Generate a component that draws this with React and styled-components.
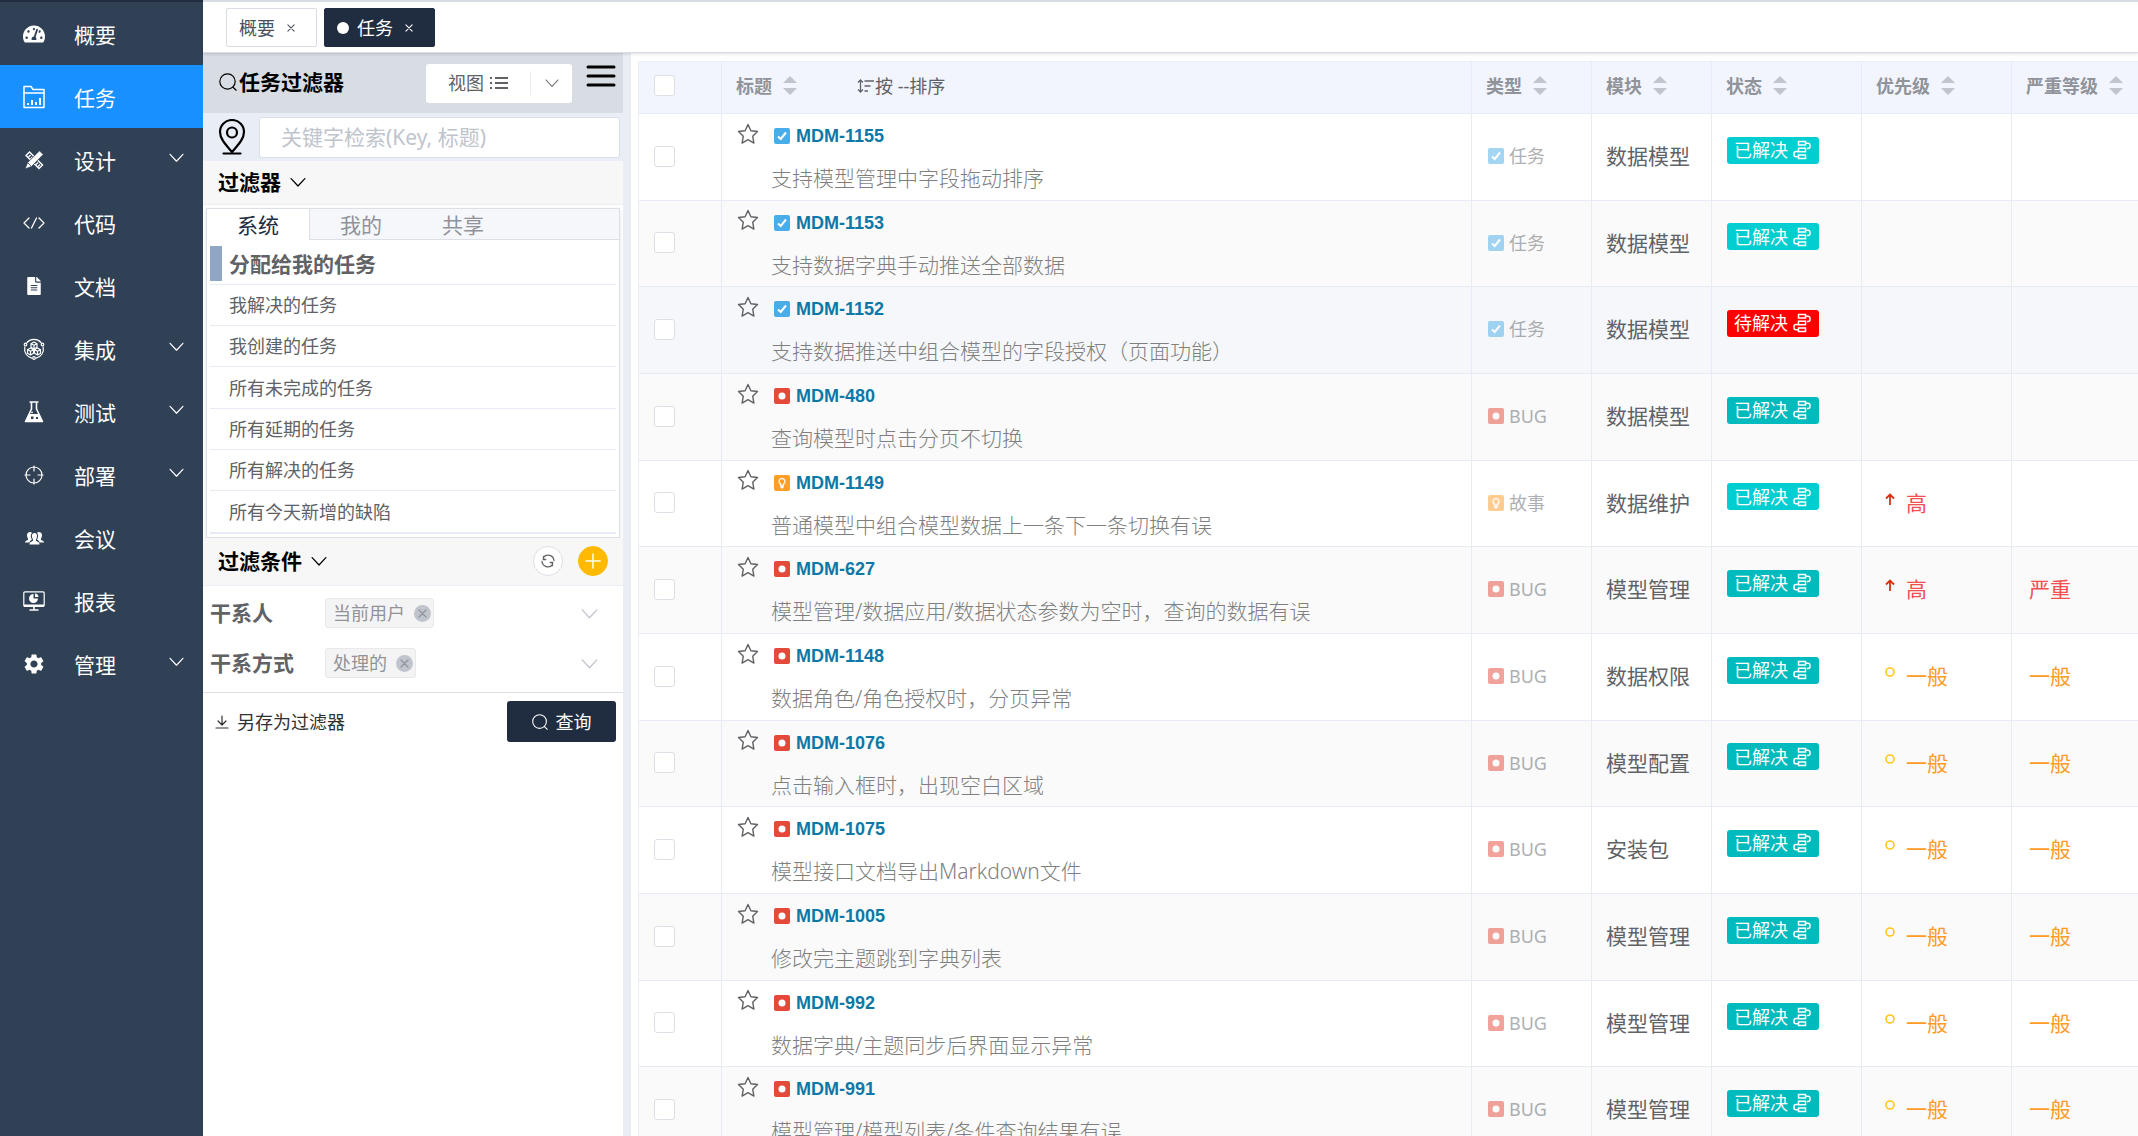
import React, { useState } from 'react';

import styled, { createGlobalStyle, css } from 'styled-components';
import { FaFileAlt, FaTachometerAlt } from 'react-icons/fa';
import { MdSettings } from 'react-icons/md';

const GlobalStyle = createGlobalStyle`
  *,
  *::before,
  *::after {
    box-sizing: border-box;
  }

  body {
    margin: 0;
    background: #fff;
    color: #606266;
    font-family: 'Noto Sans', 'Noto Sans CJK SC', sans-serif;
    font-size: 18px;
    line-height: 24px;
  }

  button,
  input {
    margin: 0;
    font: inherit;
    color: inherit;
  }

  button {
    padding: 0;
    border: 0;
    background: none;
    cursor: pointer;
  }

  a {
    color: inherit;
    text-decoration: none;
  }

  ul {
    margin: 0;
    padding: 0;
    list-style: none;
  }

  h2,
  h3 {
    margin: 0;
    font-size: 21px;
    line-height: 28px;
    color: #000;
  }

  svg {
    display: block;
    flex: none;
  }
`;

/* ---------- icons ---------- */

const Stroke = ({ size = 20, height, width = 1, box = '0 0 24 24', children }) => (
  <svg
    width={size}
    height={height || size}
    viewBox={box}
    fill="none"
    stroke="currentColor"
    strokeWidth={width}
    strokeLinecap="round"
    strokeLinejoin="round"
    aria-hidden="true"
  >
    {children}
  </svg>
);

const ChevronIcon = ({ size = 14 }) => (
  <Stroke size={size} height={size} box="0 0 14 14" width={1.1}>
    <path d="M1 4l6 6.5L13 4" />
  </Stroke>
);

const SearchIcon = ({ size = 18 }) => (
  <Stroke size={size} box="0 0 18 18" width={1.2}>
    <circle cx="8.5" cy="8.5" r="7.7" />
    <path d="M14 14.2l3.2 3" />
  </Stroke>
);

const BoardIcon = () => (
  <Stroke size={22} height={24} box="0 0 22 24" width={1.5}>
    <path d="M1 22.5V1.5h7l2 3h11v18z" />
    <path d="M1 8h20" />
    <path d="M5 20v-2M9 20v-5M13 20v-3M17 20v-7" strokeWidth="2" strokeLinecap="butt" />
  </Stroke>
);

const DesignIcon = () => (
  <svg width="20" height="20" viewBox="0 0 20 20" fill="none" stroke="currentColor" aria-hidden="true">
    <path d="M2 5.500L5.500 2 18.500 15 15 18.500z" strokeWidth="1.400" />
    <path d="M4.500 7l2-2M6.500 9l2-2M12 14.500l2-2M14 16.500l2-2" strokeWidth="1.300" />
    <path d="M15.500 0.800l3.700 3.700L7.500 16.500l-6.500 2.500L3.500 12.700z" fill="currentColor" stroke="#304156" strokeWidth="0.800" />
    <path d="M4 13l3 3" stroke="#304156" strokeWidth="0.800" />
  </svg>
);

const CodeIcon = () => (
  <Stroke size={22} height={14} box="0 0 22 14" width={1.3}>
    <path d="M6 2L1 7l5 5M16 2l5 5-5 5M13.500 2l-5 10" />
  </Stroke>
);

const IntegrationIcon = () => (
  <Stroke size={22} box="0 0 22 22" width={1.2}>
    <path d="M4 4.500A9.500 9.500 0 0 1 18 4.500M20.200 9a9.500 9.500 0 0 1-7 11.200M8.800 20.200A9.500 9.500 0 0 1 1.800 9" />
    <circle cx="2.500" cy="6.500" r="1.300" />
    <circle cx="19.500" cy="6.500" r="1.300" />
    <circle cx="11" cy="20" r="1.300" />
    <path d="M11 4l3 1.700v3.600L11 11 8 9.300V5.700zM8 5.700l3 1.600 3-1.600M11 7.300V11" />
    <path d="M7.500 10l3 1.700v3.600l-3 1.700-3-1.700v-3.600zM4.500 11.700l3 1.600 3-1.600M7.500 13.300V17" />
    <path d="M14.500 10l3 1.700v3.600l-3 1.700-3-1.700v-3.600zM11.500 11.700l3 1.600 3-1.600M14.500 13.300V17" />
  </Stroke>
);

const FlaskIcon = () => (
  <svg width="20" height="22" viewBox="0 0 20 22" aria-hidden="true">
    <path
      d="M5.500 1h9M7.500 1v7L1.500 20.500h17L12.500 8V1"
      fill="none"
      stroke="currentColor"
      strokeWidth="1.600"
      strokeLinejoin="round"
    />
    <path
      d="M5.500 13h9l4.300 8H1.200zM7 15.500v2.500h2.500v-2.500zM12 16v2h2v-2z"
      fill="currentColor"
      fillRule="evenodd"
    />
    <circle cx="8" cy="11.300" r="0.900" fill="currentColor" />
  </svg>
);

const TargetIcon = () => (
  <Stroke size={20} box="0 0 20 20" width={1.2}>
    <circle cx="10" cy="10" r="8" />
    <path d="M10 1v5M10 14v5M1 10h5M14 10h5" />
  </Stroke>
);

const MeetingIcon = () => (
  <svg width="19" height="14" viewBox="0 0 19 14" fill="currentColor" aria-hidden="true">
    <path d="M2 4c0-3 4-4 5-2-2 2-1 5 0 6.500L5 10l-.5 1.500H0C.3 9.500 2 9.500 3 9c.5-1.500-1-2-1-5z" />
    <path d="M17 4c0-3-4-4-5-2 2 2 1 5 0 6.500l2 1.500.5 1.500H19c-.3-2-2-2-3-2.500-.5-1.500 1-2 1-5z" />
    <path d="M9.500 2c3.300 0 3 4 1.500 6.500v1.300c1 1 3.500 1 3.500 3.700h-10c0-2.700 2.500-2.700 3.500-3.700V8.500C6.500 6 6.200 2 9.500 2z" />
  </svg>
);

const ReportIcon = () => (
  <svg width="22" height="20" viewBox="0 0 22 20" fill="none" stroke="currentColor" aria-hidden="true">
    <rect x="0.800" y="0.800" width="20.400" height="14.600" rx="1.200" strokeWidth="1.200" />
    <path d="M1 14.500h20" strokeWidth="2" />
    <path d="M6.500 19h9M11 16v3" strokeWidth="1.600" />
    <path d="M10.500 3v4.500h4.500a4.500 4.500 0 1 1-4.500-4.500z" fill="currentColor" stroke="none" />
    <path d="M12 2.500v3.500h3.500A4 4 0 0 0 12 2.500z" fill="currentColor" stroke="none" />
  </svg>
);

const PinIcon = () => (
  <Stroke size={30} height={36} box="0 0 30 36" width={2.2}>
    <path d="M15 33C9 26 3 20 3 13a12 12 0 0 1 24 0c0 7-6 13-12 20z" />
    <circle cx="15" cy="13.500" r="5" />
    <path d="M6.500 34.500h17" />
  </Stroke>
);

const MenuIcon = () => (
  <Stroke size={32} height={24} box="0 0 32 24" width={3}>
    <path d="M3 3h26M3 12h26M3 21h26" />
  </Stroke>
);

const ListIcon = () => (
  <svg width="18" height="16" viewBox="0 0 18 16" stroke="currentColor" strokeWidth="2" aria-hidden="true">
    <path d="M5 3h13M5 8h13M5 13h13M0 3h2M0 8h2M0 13h2" />
  </svg>
);

const SortListIcon = () => (
  <svg width="18" height="16" viewBox="0 0 18 16" fill="none" stroke="currentColor" strokeWidth="1.300" aria-hidden="true">
    <path d="M3.500 2v12M1 4.500L3.500 2 6 4.500M1 11.500L3.500 14 6 11.500M7.500 3h9.500M7.500 8h6M7.500 13h3.500" />
  </svg>
);

const StarIcon = () => (
  <Stroke size={22} box="0 0 22 22" width={1.4}>
    <path d="M11 1.500l2.900 6.200 6.600.8-4.800 4.700 1.200 6.900-5.900-3.400-5.900 3.400 1.200-6.900L1.500 8.500l6.600-.8z" />
  </Stroke>
);

const RefreshIcon = () => (
  <Stroke size={16} box="0 0 16 16" width={1.3}>
    <path d="M3.500 3.500v3M3.500 4.200A6 6 0 0 1 14 7.500M3.200 6.500h2.500" />
    <path d="M12.500 12.500v-3M12.500 11.800A6 6 0 0 1 2 8.500M12.800 9.500h-2.500" />
  </Stroke>
);

const DownloadIcon = () => (
  <Stroke size={14} box="0 0 14 14" width={1.2}>
    <path d="M7 1v8.500M3 6l4 4 4-4M1 13h12" />
  </Stroke>
);

const CloseIcon = ({ size = 9 }) => (
  <Stroke size={size} box="0 0 9 9" width={1.2}>
    <path d="M1 1l7 7M8 1L1 8" />
  </Stroke>
);

const FlowIcon = () => (
  <svg width="18" height="20" viewBox="0 0 18 20" fill="none" stroke="currentColor" strokeWidth="1.500" aria-hidden="true">
    <rect x="5.500" y="1.500" width="7" height="3.500" />
    <rect x="5.500" y="8.200" width="7" height="3.500" />
    <rect x="5.500" y="15" width="7" height="3.500" />
    <path d="M12.500 3.200H15a2 2 0 0 1 2 2v1.300a2 2 0 0 1-2 2h-1M5.500 11.500H3a2 2 0 0 0-2 2v1.300a2 2 0 0 0 2 2h2.500" />
  </svg>
);

const KindIcon = ({ kind }) => {
  const fill = { task: '#4bade8', bug: '#e5493a', story: '#ff9d26' }[kind];
  return (
    <svg width="16" height="16" viewBox="0 0 16 16" fill="none" aria-hidden="true">
      <rect width="16" height="16" rx="2" fill={fill} />
      {kind === 'task' && <path d="M4 8.500l2.700 2.500L12 4.500" stroke="#fff" strokeWidth="2" />}
      {kind === 'bug' && <circle cx="8" cy="8" r="3.500" fill="#fff" />}
      {kind === 'story' && (
        <>
          <path d="M8 3.300a3 3 0 0 0-1.600 5.500V10h3.200V8.800A3 3 0 0 0 8 3.300z" stroke="#fff" strokeWidth="1.200" />
          <path d="M6.200 10.500h3.600v1.500L8.800 13.500H7.200L6.200 12z" fill="#fff" />
        </>
      )}
    </svg>
  );
};

const ArrowUpIcon = () => (
  <svg width="10" height="12" viewBox="0 0 10 12" fill="none" stroke="#d9300e" strokeWidth="1.800" aria-hidden="true">
    <path d="M5 12V1.500M1 5.500l4-4 4 4" />
  </svg>
);

const RingIcon = () => (
  <svg width="10" height="12" viewBox="0 0 10 12" fill="none" stroke="#ffc61a" strokeWidth="1.600" aria-hidden="true">
    <circle cx="5" cy="6" r="4" />
  </svg>
);

/* ---------- layout ---------- */

const Page = styled.div`
  display: flex;
  height: 100vh;
  overflow: hidden;
`;

const Sidebar = styled.nav`
  flex: none;
  width: 203px;
  border-top: 2px solid #202d40;
  background: #304156;
`;

const NavItem = styled.a`
  display: grid;
  grid-template-columns: 26px 1fr 16px;
  column-gap: 27px;
  align-items: center;
  height: 63px;
  padding: 0 18px 0 21px;
  background: ${({ $active }) => ($active ? '#1890ff' : 'transparent')};
  color: #fff;
  font-size: 21px;

  .glyph {
    display: flex;
    justify-content: center;
  }

  .label {
    padding-top: 2px;
  }

  > svg {
    margin-bottom: 4px;
  }
`;

const Main = styled.main`
  display: flex;
  flex: 1;
  flex-direction: column;
  min-width: 0;
`;

const TopTabs = styled.div`
  display: flex;
  flex: none;
  gap: 7px;
  z-index: 1;
  height: 53px;
  padding: 6px 23px;
  border-top: 2px solid #d8dce5;
  border-bottom: 1px solid #d8dce5;
  background: #fff;
  box-shadow: 0 1px 3px rgba(0, 0, 0, 0.14);
`;

const TopTab = styled.div`
  display: flex;
  align-items: center;
  gap: 6px;
  height: 39px;
  padding: 0 15px 0 12px;
  border: 1px solid #d8dce5;
  border-radius: 2px;
  background: #fff;
  color: #495060;

  button {
    display: flex;
    align-items: center;
    justify-content: center;
    width: 20px;
    height: 20px;
  }

  ${({ $active }) =>
    $active &&
    css`
      border-color: #202d40;
      background: #202d40;
      color: #fff;

      &::before {
        content: '';
        width: 12px;
        height: 12px;
        margin-right: 2px;
        border-radius: 50%;
        background: #fff;
      }
    `}
`;

const Content = styled.div`
  display: flex;
  flex: 1;
  min-height: 0;
`;

/* ---------- filter panel ---------- */

const Panel = styled.aside`
  flex: none;
  width: 428px;
  border-right: 8px solid #e9edf4;
`;

const PanelHeader = styled.header`
  display: flex;
  align-items: center;
  height: 60px;
  padding: 0 6px 0 16px;
  background: #d8dce3;

  h2 {
    display: flex;
    flex: 1;
    align-items: center;
    gap: 2px;
    padding-bottom: 2px;
  }
`;

const ViewSwitch = styled.div`
  display: flex;
  align-items: center;
  height: 39px;
  margin-right: 13px;
  border-radius: 3px;
  background: #fff;

  button {
    display: flex;
    align-items: center;
    justify-content: center;
    gap: 6px;
    width: 104px;
    height: 24px;
  }

  button + button {
    width: 42px;
    border-left: 1px solid #e9ebf0;
  }
`;

const MenuButton = styled.button`
  align-self: flex-start;
  padding-top: 11px;
  color: #000;
`;

const SearchRow = styled.div`
  display: flex;
  align-items: center;
  gap: 12px;
  height: 48px;
  padding: 0 3px 0 14px;
  background: #e9edf6;
  color: #000;

  input {
    flex: 1;
    min-width: 0;
    height: 41px;
    padding: 0 21px;
    border: 1px solid #dcdfe6;
    border-radius: 3px;
    background: #fff;
    font-size: 21px;
  }

  input::placeholder {
    color: #c0c4cc;
  }
`;

const SectionBar = styled.div`
  display: flex;
  align-items: center;
  gap: 15px;
  height: ${({ $tall }) => ($tall ? 48 : 44)}px;
  padding: 0 15px 2px;
  border-bottom: 1px solid #ebeef5;
  background: #f7f7f7;

  h3 {
    flex: 1;
  }

  h3 button {
    display: flex;
    align-items: center;
    gap: 9px;
  }
`;

const RoundButton = styled.button`
  display: flex;
  align-items: center;
  justify-content: center;
  width: 30px;
  height: 30px;
  border: 1px solid ${({ $primary }) => ($primary ? '#ffba00' : '#dcdfe6')};
  border-radius: 50%;
  background: ${({ $primary }) => ($primary ? '#ffba00' : '#fff')};
  color: ${({ $primary }) => ($primary ? '#fff' : '#606266')};
`;

const Card = styled.div`
  margin: 3px 3px 0;
  border: 1px solid #dcdfe6;
  background: #fff;
  box-shadow: 0 2px 4px rgba(0, 0, 0, 0.12);
`;

const CardTabs = styled.div`
  display: flex;
  height: 31px;
  background: #f5f7fa;
  border-bottom: 1px solid #dcdfe6;
`;

const CardTab = styled.button`
  height: 31px;
  padding: 0 30px;
  font-size: 21px;
  color: ${({ $active }) => ($active ? '#202d40' : '#909399')};

  ${({ $active }) =>
    $active &&
    css`
      border-right: 1px solid #dcdfe6;
      background: #fff;
    `}
`;

const FilterList = styled.ul`
  padding: 3px;

  li {
    border-bottom: 1px solid #e6ebf5;
  }

  li:last-child {
    border-bottom-width: 2px;
  }

  button {
    display: flex;
    align-items: center;
    width: 100%;
    height: 40px;
    padding-left: 19px;
    text-align: left;
  }

  li:nth-child(3n + 1) button {
    height: 41px;
  }
`;

const FilterItem = styled.li`
  ${({ $current }) =>
    $current &&
    css`
      &&& button {
        height: 35px;
        margin: 3px 0;
        padding-left: 7px;
        border-left: 12px solid #8fa7c4;
        font-size: 21px;
        font-weight: 700;
      }
    `}
`;

const Conditions = styled.div`
  padding: 2px 3px 4px;
  border-bottom: 1px solid #dcdfe6;
`;

const Condition = styled.div`
  display: flex;
  align-items: center;
  height: 50px;
  padding: 0 22px 0 4px;

  > span {
    width: 115px;
    font-size: 21px;
    font-weight: 700;
  }

  > button {
    margin-left: auto;
    color: #c0c4cc;
  }
`;

const Chip = styled.div`
  display: flex;
  align-items: center;
  gap: 9px;
  height: 30px;
  padding: 0 2px 0 7px;
  border: 1px solid #e9e9eb;
  border-radius: 3px;
  background: #f4f4f5;
  color: #909399;

  button {
    display: flex;
    align-items: center;
    justify-content: center;
    width: 17px;
    height: 17px;
    border-radius: 50%;
    background: #c0c4cc;
  }
`;

const PanelFooter = styled.div`
  display: flex;
  align-items: center;
  justify-content: space-between;
  padding: 8px 7px 8px 12px;
  color: #303133;

  button {
    display: flex;
    align-items: center;
    gap: 8px;
  }
`;

const QueryButton = styled.button`
  && {
    justify-content: center;
    width: 109px;
    height: 41px;
    border-radius: 3px;
    background: #202d40;
    color: #fff;
  }
`;

/* ---------- table ---------- */

const TableArea = styled.section`
  flex: 1;
  min-width: 0;
  padding: 8px 0 0 7px;
  overflow: hidden;
`;

const Table = styled.table`
  width: 100%;
  border-top: 1px solid #ebeef5;
  border-left: 1px solid #ebeef5;
  border-spacing: 0;
  table-layout: fixed;

  th,
  td {
    padding: 0 14px 2px;
    border-right: 1px solid #e6ebf5;
    border-bottom: 1px solid #e6ebf5;
    text-align: left;
  }

  th {
    height: 52px;
    padding-bottom: 4px;
    background: #f2f5fe;
    color: #909399;
    white-space: nowrap;
  }

  th:first-child,
  td:first-child {
    padding-left: 15px;
  }

  th:last-child,
  td:last-child {
    border-right: 0;
  }
`;

const Row = styled.tr`
  height: 87px;
  background: ${({ $hover }) => ($hover ? '#f5f7fa' : '#fff')};

  &:nth-child(even) {
    background: #fafafa;
  }

  &:nth-child(3n + 2) {
    height: 86px;
  }
`;

const Check = styled.input.attrs({ type: 'checkbox' })`
  display: block;
  width: 21px;
  height: 21px;
  border: 1px solid #dcdfe6;
  border-radius: 3px;
  background: #fff;
  appearance: none;

  &:checked {
    border-color: #1890ff;
    background: #1890ff;
  }
`;

const HeadLine = styled.div`
  display: flex;
  align-items: center;
  gap: 11px;

  .sort-by {
    display: flex;
    align-items: center;
    margin-left: 49px;
    color: #606266;
    font-weight: 400;
  }
`;

const Caret = styled.button`
  display: flex;
  flex-direction: column;
  gap: 5px;

  &::before,
  &::after {
    content: '';
    border: 7px solid transparent;
  }

  &::before {
    border-top: 0;
    border-bottom-color: #c0c4cc;
  }

  &::after {
    border-bottom: 0;
    border-top-color: #c0c4cc;
  }
`;

const TitleLine = styled.div`
  display: flex;
  align-items: center;
  height: 24px;
  margin-top: 4px;

  button {
    padding: 0 0 5px 1px;
  }

  a {
    display: flex;
    align-items: center;
    gap: 6px;
    margin-left: 15px;
    color: #0d78a6;
    font-family: 'Liberation Sans', Arial, sans-serif;
    font-weight: 700;
  }
`;

const Summary = styled.div`
  height: 28px;
  margin-top: 16px;
  padding-left: 35px;
  overflow: hidden;
  color: #7f7f7f;
  font-size: 21px;
  font-weight: 300;
  line-height: 28px;
  text-overflow: ellipsis;
  white-space: nowrap;
`;

const Kind = styled.div`
  display: flex;
  align-items: center;
  gap: 5px;
  padding-left: 2px;
  opacity: 0.5;
`;

const Module = styled.div`
  font-size: 21px;
  line-height: 28px;
  white-space: nowrap;
`;

const StatusTag = styled.button`
  display: flex;
  align-items: center;
  gap: 5px;
  height: 27px;
  margin: 0 0 12px 1px;
  padding: 0 8px 0 7px;
  border-radius: 3px;
  background: ${({ $color }) => $color};
  color: #fff;
`;

const Level = styled.div`
  display: flex;
  gap: 11px;
  padding-left: ${({ $indent }) => $indent}px;
  color: ${({ $high }) => ($high ? '#f25050' : '#ff9a26')};
  font-size: 21px;
  line-height: 28px;

  svg {
    margin-top: 4px;
  }
`;

/* ---------- data ---------- */

const NAV = [
  { label: '概要', icon: <FaTachometerAlt size={22} /> },
  { label: '任务', icon: <BoardIcon />, active: true },
  { label: '设计', icon: <DesignIcon />, more: true },
  { label: '代码', icon: <CodeIcon /> },
  { label: '文档', icon: <FaFileAlt size={18} /> },
  { label: '集成', icon: <IntegrationIcon />, more: true },
  { label: '测试', icon: <FlaskIcon />, more: true },
  { label: '部署', icon: <TargetIcon />, more: true },
  { label: '会议', icon: <MeetingIcon /> },
  { label: '报表', icon: <ReportIcon /> },
  { label: '管理', icon: <MdSettings size={24} />, more: true },
];

const FILTERS = [
  '分配给我的任务',
  '我解决的任务',
  '我创建的任务',
  '所有未完成的任务',
  '所有延期的任务',
  '所有解决的任务',
  '所有今天新增的缺陷',
];

const KINDS = { task: '任务', bug: 'BUG', story: '故事' };

const ISSUES = [
  { id: 'MDM-1155', kind: 'task', title: '支持模型管理中字段拖动排序', module: '数据模型' },
  { id: 'MDM-1153', kind: 'task', title: '支持数据字典手动推送全部数据', module: '数据模型' },
  {
    id: 'MDM-1152',
    kind: 'task',
    title: '支持数据推送中组合模型的字段授权（页面功能）',
    module: '数据模型',
    open: true,
    hover: true,
  },
  { id: 'MDM-480', kind: 'bug', title: '查询模型时点击分页不切换', module: '数据模型' },
  { id: 'MDM-1149', kind: 'story', title: '普通模型中组合模型数据上一条下一条切换有误', module: '数据维护', priority: '高' },
  {
    id: 'MDM-627',
    kind: 'bug',
    title: '模型管理/数据应用/数据状态参数为空时，查询的数据有误',
    module: '模型管理',
    priority: '高',
    severity: '严重',
  },
  { id: 'MDM-1148', kind: 'bug', title: '数据角色/角色授权时，分页异常', module: '数据权限', priority: '一般', severity: '一般' },
  { id: 'MDM-1076', kind: 'bug', title: '点击输入框时，出现空白区域', module: '模型配置', priority: '一般', severity: '一般' },
  { id: 'MDM-1075', kind: 'bug', title: '模型接口文档导出Markdown文件', module: '安装包', priority: '一般', severity: '一般' },
  { id: 'MDM-1005', kind: 'bug', title: '修改完主题跳到字典列表', module: '模型管理', priority: '一般', severity: '一般' },
  { id: 'MDM-992', kind: 'bug', title: '数据字典/主题同步后界面显示异常', module: '模型管理', priority: '一般', severity: '一般' },
  { id: 'MDM-991', kind: 'bug', title: '模型管理/模型列表/条件查询结果有误', module: '模型管理', priority: '一般', severity: '一般' },
];

const statusColor = ({ open, kind }) => {
  if (open) return '#ff0000';
  return kind === 'bug' ? '#00bbbd' : '#00ced1';
};

/* ---------- parts ---------- */

const SideNav = () => (
  <Sidebar>
    {NAV.map(({ label, icon, active, more }) => (
      <NavItem key={label} href="#" $active={active}>
        <span className="glyph">{icon}</span>
        <span className="label">{label}</span>
        {more && <ChevronIcon size={15} />}
      </NavItem>
    ))}
  </Sidebar>
);

const FilterPanel = () => {
  const [tab, setTab] = useState('系统');
  const [current, setCurrent] = useState(FILTERS[0]);

  return (
    <Panel>
      <PanelHeader>
        <h2>
          <SearchIcon />
          任务过滤器
        </h2>
        <ViewSwitch>
          <button type="button">
            视图
            <ListIcon />
          </button>
          <button type="button" aria-label="切换视图">
            <ChevronIcon />
          </button>
        </ViewSwitch>
        <MenuButton type="button" aria-label="菜单">
          <MenuIcon />
        </MenuButton>
      </PanelHeader>
      <SearchRow>
        <PinIcon />
        <input type="text" aria-label="关键字检索" placeholder="关键字检索(Key, 标题)" />
      </SearchRow>
      <SectionBar>
        <h3>
          <button type="button">
            过滤器
            <ChevronIcon size={16} />
          </button>
        </h3>
      </SectionBar>
      <Card>
        <CardTabs role="tablist">
          {['系统', '我的', '共享'].map((name) => (
            <CardTab
              key={name}
              type="button"
              role="tab"
              aria-selected={tab === name}
              $active={tab === name}
              onClick={() => setTab(name)}
            >
              {name}
            </CardTab>
          ))}
        </CardTabs>
        <FilterList>
          {FILTERS.map((name) => (
            <FilterItem key={name} $current={current === name}>
              <button type="button" onClick={() => setCurrent(name)}>
                {name}
              </button>
            </FilterItem>
          ))}
        </FilterList>
      </Card>
      <SectionBar $tall>
        <h3>
          <button type="button">
            过滤条件
            <ChevronIcon size={16} />
          </button>
        </h3>
        <RoundButton type="button" aria-label="重置">
          <RefreshIcon />
        </RoundButton>
        <RoundButton type="button" aria-label="添加条件" $primary>
          <Stroke size={18} box="0 0 18 18" width={1.5}>
            <path d="M9 2v14M2 9h14" />
          </Stroke>
        </RoundButton>
      </SectionBar>
      <Conditions>
        {[
          ['干系人', '当前用户'],
          ['干系方式', '处理的'],
        ].map(([label, value]) => (
          <Condition key={label}>
            <span>{label}</span>
            <Chip>
              {value}
              <button type="button" aria-label={`移除${value}`}>
                <CloseIcon />
              </button>
            </Chip>
            <button type="button" aria-label={`选择${label}`}>
              <ChevronIcon size={17} />
            </button>
          </Condition>
        ))}
      </Conditions>
      <PanelFooter>
        <button type="button">
          <DownloadIcon />
          另存为过滤器
        </button>
        <QueryButton type="button">
          <SearchIcon size={16} />
          查询
        </QueryButton>
      </PanelFooter>
    </Panel>
  );
};

const HeadCell = ({ children }) => (
  <th scope="col">
    <HeadLine>
      {children}
      <Caret type="button" aria-label={`按${children}排序`} />
    </HeadLine>
  </th>
);

const IssueRow = ({ issue }) => (
  <Row $hover={issue.hover}>
    <td>
      <Check aria-label={issue.id} />
    </td>
    <td>
      <TitleLine>
        <button type="button" aria-label="收藏">
          <StarIcon />
        </button>
        <a href="#">
          <KindIcon kind={issue.kind} />
          {issue.id}
        </a>
      </TitleLine>
      <Summary>{issue.title}</Summary>
    </td>
    <td>
      <Kind>
        <KindIcon kind={issue.kind} />
        {KINDS[issue.kind]}
      </Kind>
    </td>
    <td>
      <Module>{issue.module}</Module>
    </td>
    <td>
      <StatusTag type="button" $color={statusColor(issue)}>
        {issue.open ? '待解决' : '已解决'}
        <FlowIcon />
      </StatusTag>
    </td>
    <td>
      {issue.priority && (
        <Level $indent={9} $high={issue.priority === '高'}>
          {issue.priority === '高' ? <ArrowUpIcon /> : <RingIcon />}
          {issue.priority}
        </Level>
      )}
    </td>
    <td>
      {issue.severity && (
        <Level $indent={3} $high={issue.severity === '严重'}>
          {issue.severity}
        </Level>
      )}
    </td>
  </Row>
);

const IssueTable = () => (
  <TableArea>
    <Table>
      <colgroup>
        <col width="83" />
        <col />
        <col width="120" />
        <col width="120" />
        <col width="150" />
        <col width="150" />
        <col width="126" />
      </colgroup>
      <thead>
        <tr>
          <th scope="col">
            <Check aria-label="全选" />
          </th>
          <th scope="col">
            <HeadLine>
              标题
              <Caret type="button" aria-label="按标题排序" />
              <button type="button" className="sort-by">
                <SortListIcon />按 --排序
              </button>
            </HeadLine>
          </th>
          <HeadCell>类型</HeadCell>
          <HeadCell>模块</HeadCell>
          <HeadCell>状态</HeadCell>
          <HeadCell>优先级</HeadCell>
          <HeadCell>严重等级</HeadCell>
        </tr>
      </thead>
      <tbody>
        {ISSUES.map((issue) => (
          <IssueRow key={issue.id} issue={issue} />
        ))}
      </tbody>
    </Table>
  </TableArea>
);

const App = () => (
  <>
    <GlobalStyle />
    <Page>
      <SideNav />
      <Main>
        <TopTabs>
          <TopTab>
            概要
            <button type="button" aria-label="关闭概要">
              <CloseIcon size={8} />
            </button>
          </TopTab>
          <TopTab $active>
            任务
            <button type="button" aria-label="关闭任务">
              <CloseIcon size={8} />
            </button>
          </TopTab>
        </TopTabs>
        <Content>
          <FilterPanel />
          <IssueTable />
        </Content>
      </Main>
    </Page>
  </>
);

export default App;
